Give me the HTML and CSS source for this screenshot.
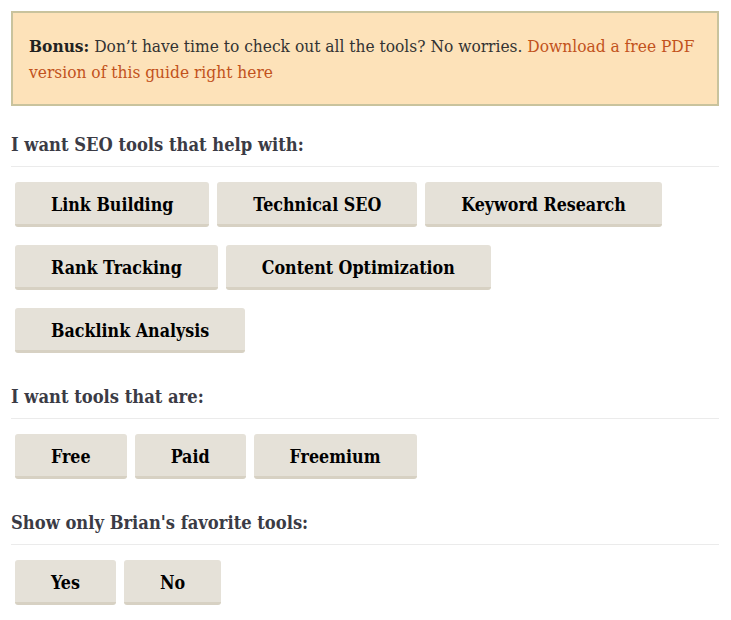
FILE: index.html
```html
<!DOCTYPE html>
<html lang="en">
<head>
<meta charset="utf-8">
<title>SEO Tools Filter</title>
<link rel="stylesheet" href="styles.css">
</head>
<body>
<div class="page">
  <div class="bonus">
    <strong>Bonus:</strong> Don’t have time to check out all the tools? No worries. <a href="#">Download a free PDF version of this guide right here</a>
  </div>

  <div class="section">
    <h3 class="section-title">I want SEO tools that help with:</h3>
    <div class="options">
      <button class="opt">Link Building</button>
      <button class="opt">Technical SEO</button>
      <button class="opt">Keyword Research</button>
      <button class="opt">Rank Tracking</button>
      <button class="opt">Content Optimization</button>
      <button class="opt">Backlink Analysis</button>
    </div>
  </div>

  <div class="section">
    <h3 class="section-title">I want tools that are:</h3>
    <div class="options">
      <button class="opt">Free</button>
      <button class="opt">Paid</button>
      <button class="opt">Freemium</button>
    </div>
  </div>

  <div class="section">
    <h3 class="section-title">Show only Brian's favorite tools:</h3>
    <div class="options">
      <button class="opt">Yes</button>
      <button class="opt">No</button>
    </div>
  </div>
</div>
</body>
</html>
```

FILE: styles.css
```css
html, body {
  margin: 0;
  padding: 0;
  background: #ffffff;
}

body {
  font-family: "DejaVu Serif Condensed", "DejaVu Serif", serif;
  color: #333333;
}

.page {
  padding: 11px 12px 11px 11px;
}

.bonus {
  background: #fde2b9;
  border: 2px solid #c9c39d;
  padding: 20px 16px 19px;
  font-size: 17.2px;
  line-height: 26px;
  color: #333333;
  margin-bottom: 26px;
}

.bonus strong {
  color: #222222;
}

.bonus a {
  color: #c2521c;
  text-decoration: none;
}

.section + .section {
  margin-top: 31px;
}

.section-title {
  margin: 0;
  font-size: 18.2px;
  line-height: 26px;
  font-weight: bold;
  color: #3b3b45;
  padding-bottom: 8px;
  border-bottom: 1px solid #ebebeb;
}

.options {
  display: flex;
  flex-wrap: wrap;
  column-gap: 8px;
  row-gap: 18px;
  padding: 15px 4px 0;
}

.opt {
  font-family: inherit;
  font-size: 17.7px;
  line-height: 18px;
  font-weight: bold;
  color: #000000;
  background: #e5e1d8;
  border: 0;
  border-bottom: 3px solid #d7d1c3;
  border-radius: 3px;
  padding: 14px 36px 10px;
  margin: 0;
  cursor: pointer;
}
```
